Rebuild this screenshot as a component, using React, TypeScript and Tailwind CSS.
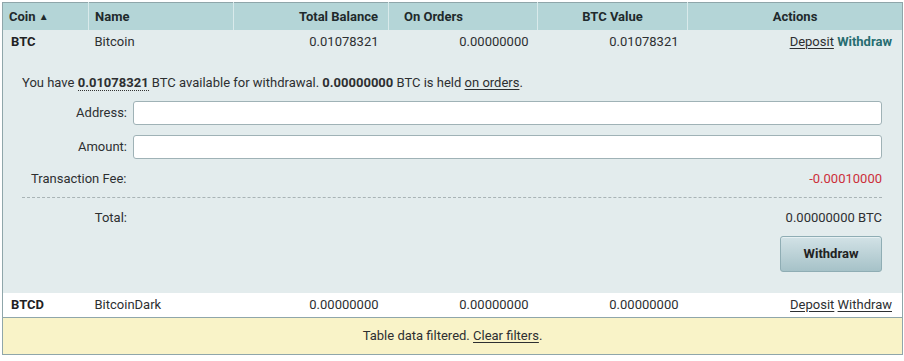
import React from 'react';

const cols = [86, 145, 155, 149, 150, 215];

function HeaderRow() {
  return (
    <tr className="h-[27px] bg-[#b4d5d7] text-[#1f2a2c] font-bold">
      <th className="pl-[6px] text-left font-bold">
        Coin <span className="text-[10px] align-[1px]">▲</span>
      </th>
      <th className="border-l border-[#d9eaeb] pl-[6px] text-left font-bold">Name</th>
      <th className="border-l border-[#d9eaeb] pr-[10px] text-right font-bold">Total Balance</th>
      <th className="border-l border-[#d9eaeb] pl-[15px] text-left font-bold">On Orders</th>
      <th className="border-l border-[#d9eaeb] text-center font-bold">BTC Value</th>
      <th className="border-l border-[#d9eaeb] text-center font-bold">Actions</th>
    </tr>
  );
}

interface CoinRowProps {
  coin: string;
  name: string;
  total: string;
  orders: string;
  value: string;
  open?: boolean;
}

function CoinRow({ coin, name, total, orders, value, open }: CoinRowProps) {
  return (
    <tr className={open ? 'h-[24px] bg-[#e3eced]' : 'h-[25px] bg-white'}>
      <td className="pl-[8px] font-bold text-[#1f2224]">{coin}</td>
      <td className="pl-[6px]">{name}</td>
      <td className="pr-[10px] text-right">{total}</td>
      <td className="pr-[9px] text-right">{orders}</td>
      <td className="pr-[9px] text-right">{value}</td>
      <td className="pr-[10px] text-right">
        <span className="underline underline-offset-2">Deposit</span>{' '}
        {open ? (
          <span className="font-bold text-[#276d70]">Withdraw</span>
        ) : (
          <span className="underline underline-offset-2">Withdraw</span>
        )}
      </td>
    </tr>
  );
}

function WithdrawPanel() {
  return (
    <tr className="bg-[#e3eced]">
      <td colSpan={6} className="pl-[19px] pr-[20px] pt-[19px] pb-[21px]">
        <div className="h-[19px] leading-[19px]">
          You have{' '}
          <span className="font-bold border-b border-dotted border-[#333]">0.01078321</span>{' '}
          BTC available for withdrawal. <span className="font-bold">0.00000000</span> BTC is held{' '}
          <span className="underline underline-offset-2">on orders</span>.
        </div>
        <div className="mt-[9px] flex items-center gap-[6px]">
          <label className="w-[105px] text-right">Address:</label>
          <input className="h-[24px] flex-1 rounded-[3px] border border-[#9fb2b6] bg-white" />
        </div>
        <div className="mt-[10px] flex items-center gap-[6px]">
          <label className="w-[105px] text-right">Amount:</label>
          <input className="h-[24px] flex-1 rounded-[3px] border border-[#9fb2b6] bg-white" />
        </div>
        <div className="mt-[11px] flex h-[19px] items-center justify-between">
          <span className="pl-[9px]">Transaction Fee:</span>
          <span className="text-[#cc2f3a]">-0.00010000</span>
        </div>
        <div className="mt-[8px] border-t border-dashed border-[#a9b4b6]" />
        <div className="mt-[11px] flex h-[19px] items-center justify-between">
          <span className="w-[105px] text-right">Total:</span>
          <span>0.00000000 BTC</span>
        </div>
        <div className="mt-[8px] flex justify-end">
          <button className="h-[36px] w-[102px] rounded-[3px] border border-[#8fadb4] bg-gradient-to-b from-[#d2e2e6] to-[#a6c2c8] font-bold text-[#222] shadow-[inset_0_1px_0_#e6f0f2]">
            Withdraw
          </button>
        </div>
      </td>
    </tr>
  );
}

export default function App() {
  return (
    <div className="bg-white pl-[2px] pt-[2px]" style={{ fontFamily: 'Roboto, "Liberation Sans", sans-serif' }}>
      <table className="w-[900px] table-fixed border-collapse border border-[#8fa6aa] text-[13px] text-[#2d2f31]">
        <colgroup>
          {cols.map((w, i) => (
            <col key={i} style={{ width: w }} />
          ))}
        </colgroup>
        <thead>
          <HeaderRow />
        </thead>
        <tbody>
          <CoinRow coin="BTC" name="Bitcoin" total="0.01078321" orders="0.00000000" value="0.01078321" open />
          <WithdrawPanel />
          <CoinRow coin="BTCD" name="BitcoinDark" total="0.00000000" orders="0.00000000" value="0.00000000" />
          <tr className="h-[37px] border-t border-[#8fa6aa] bg-[#f9f3c8]">
            <td colSpan={6} className="text-center">
              Table data filtered. <span className="underline underline-offset-2">Clear filters</span>.
            </td>
          </tr>
        </tbody>
      </table>
    </div>
  );
}
